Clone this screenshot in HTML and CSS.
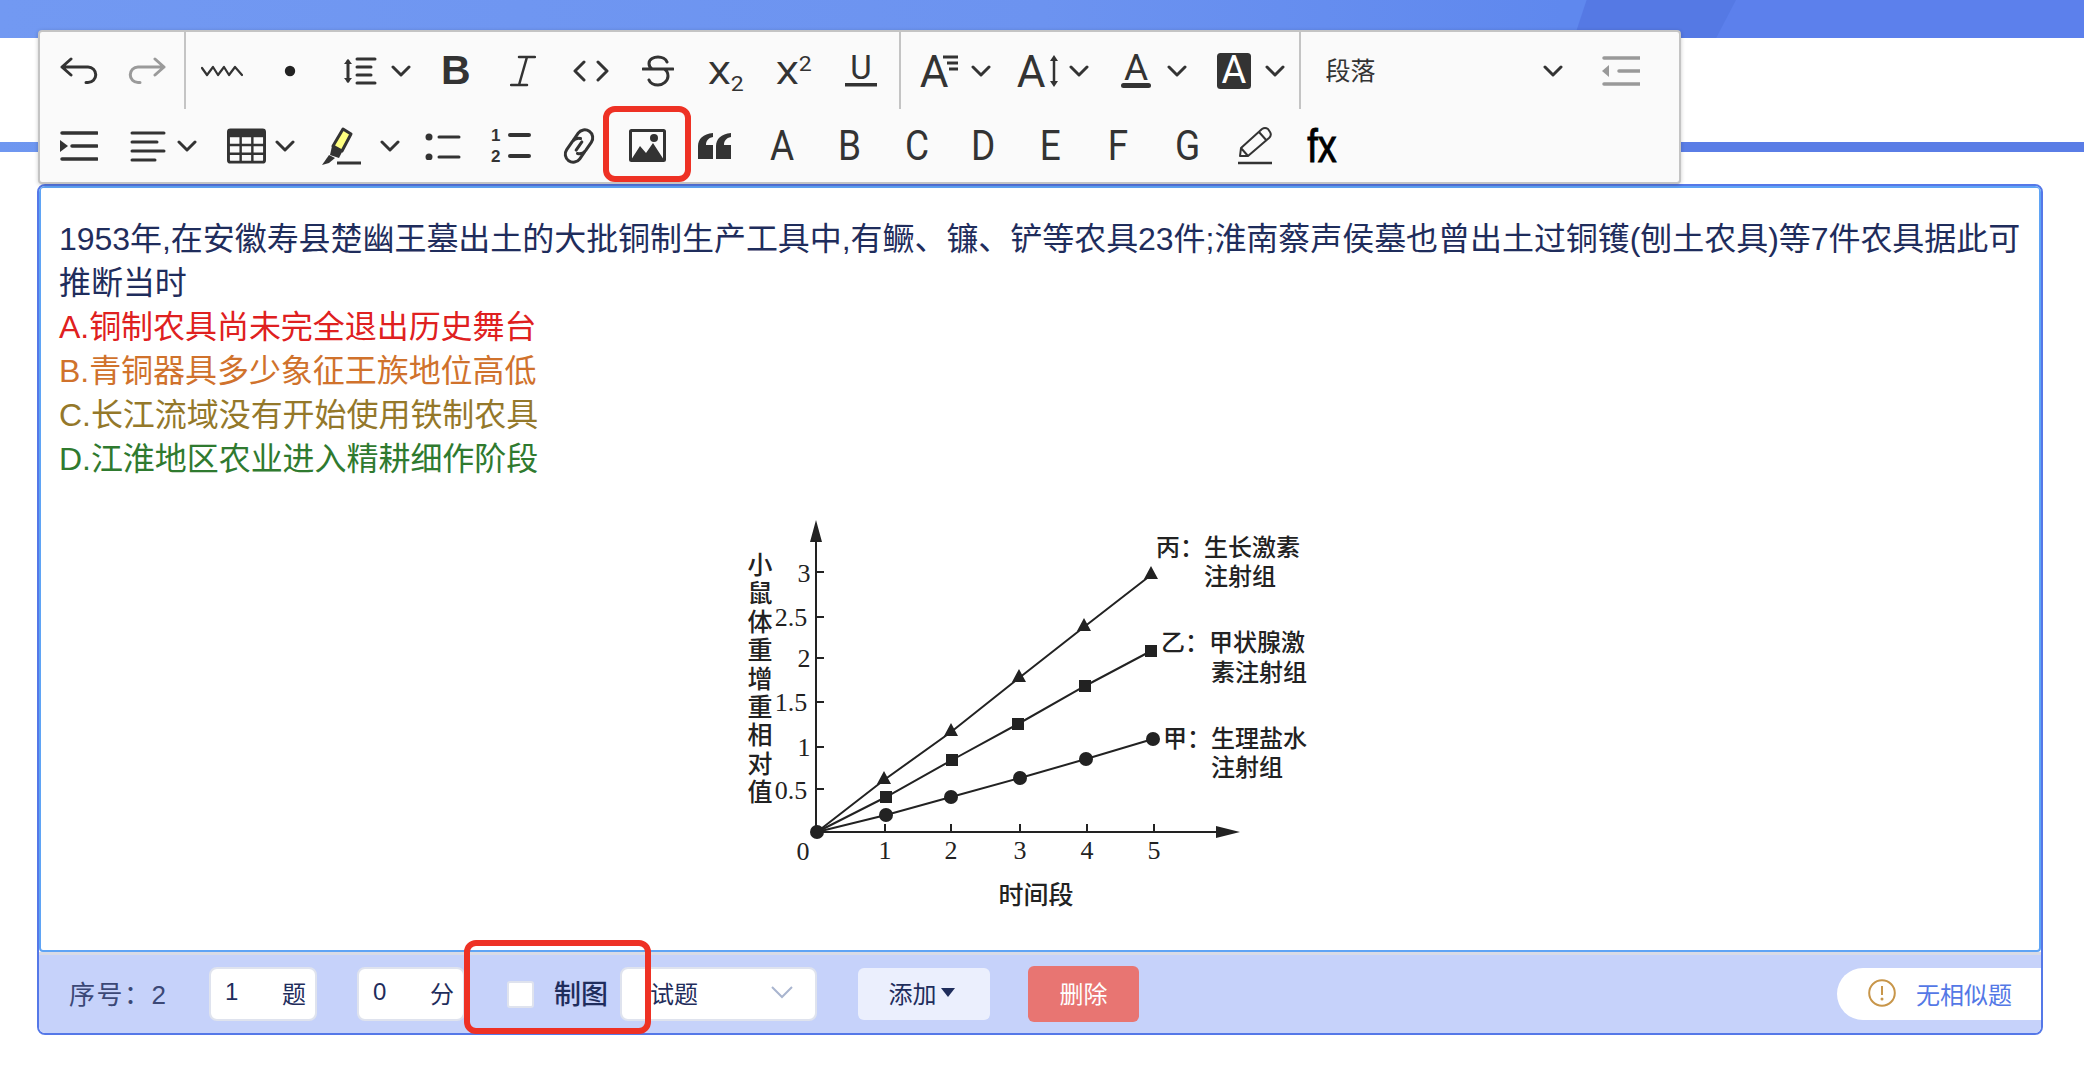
FILE: index.html
```html
<!DOCTYPE html>
<html lang="zh-CN">
  <head>
    <meta charset="UTF-8" />
    <title>试题编辑</title>
    <link rel="stylesheet" href="styles.css">
  </head>
  <body>
    <header class="page-head">
      <div class="band"></div>
      <div class="head-line"></div>
    </header>

    <div class="toolbar">
      <div class="tool-row">
        <span class="btn"><svg class="ico" width="38" height="28" viewBox="0 0 38 28"><path d="M11 2L2 10l9 8M2 10h26a7.5 7.5 0 0 1 0 15.5h-2"/></svg></span>
        <span class="btn"><svg class="ico ico-off" width="38" height="28" viewBox="0 0 38 28"><path d="M27 2l9 8-9 8M36 10H10a7.5 7.5 0 0 0 0 15.5h2"/></svg></span>
        <span class="sep"></span>
        <span class="btn"><svg class="ico ico-thin" width="42" height="12" viewBox="0 0 42 12"><path d="M1 3l5 7 6-8 5 8 6-8 5 8 6-8 7 8"/></svg></span>
        <span class="btn"><svg width="12" height="12" viewBox="0 0 12 12"><circle cx="6" cy="6" r="5.2" fill="#222"/></svg></span>
        <span class="drop">
          <span class="drop-icon"><svg class="ico" width="34" height="28" viewBox="0 0 34 28"><path d="M5 4v20M14 2h18M14 10h14M14 18h14M14 26h18"/><path class="solid" d="M1 7l4-5 4 5zM1 21l4 5 4-5z"/></svg></span>
          <svg class="chev" viewBox="0 0 20 12"><path d="M2 2l8 8 8-8"/></svg>
        </span>
        <span class="btn-n"><span class="glyph-b">B</span></span>
        <span class="btn-n"><svg class="ico ico-mid" width="26" height="32" viewBox="0 0 26 32"><path d="M9 2h16M1 30h16M17 2L9 30"/></svg></span>
        <span class="btn-n"><svg class="ico" width="36" height="22" viewBox="0 0 36 22"><path d="M11 2L2 11l9 9M25 2l9 9-9 9"/></svg></span>
        <span class="btn-n"><svg class="ico" width="32" height="32" viewBox="0 0 32 32"><path d="M1 14h30M25 7c-1-3-5-5-9-5s-9 2-9 6.500c0 2 1 4 3 5.500M22 14c3 1.500 4 4 4 7 0 5-5 9-10 9-4 0-8-2-9-5"/></svg></span>
        <span class="btn-n"><span class="glyph-x">X<sub>2</sub></span></span>
        <span class="btn-n"><span class="glyph-x">X<sup>2</sup></span></span>
        <span class="btn-n"><svg class="ico-box" width="34" height="34" viewBox="0 0 34 34"><text class="ico-text" x="17" y="25" text-anchor="middle" font-size="33">U</text><rect x="1" y="29" width="32" height="3.500" fill="#333"/></svg></span>
        <span class="sep sep-b"></span>
        <span class="drop">
          <span class="drop-icon"><svg class="ico-box" width="40" height="34" viewBox="0 0 40 34"><text class="ico-text" x="14" y="33" text-anchor="middle" font-size="44">A</text><path d="M23 3h15M27 9h11M29 15h9" stroke="#333" stroke-width="3"/></svg></span>
          <svg class="chev" viewBox="0 0 20 12"><path d="M2 2l8 8 8-8"/></svg>
        </span>
        <span class="drop">
          <span class="drop-icon"><svg class="ico-box" width="44" height="34" viewBox="0 0 44 34"><text class="ico-text" x="15" y="33" text-anchor="middle" font-size="44">A</text><path d="M38 4v26" stroke="#333" stroke-width="2.500"/><path d="M34 7l4-6 4 6zM34 27l4 6 4-6z" fill="#333"/></svg></span>
          <svg class="chev" viewBox="0 0 20 12"><path d="M2 2l8 8 8-8"/></svg>
        </span>
        <span class="drop">
          <span class="drop-icon"><svg class="ico-box" width="32" height="36" viewBox="0 0 32 36"><text class="ico-text" x="16" y="27" text-anchor="middle" font-size="37">A</text><rect x="1" y="30" width="30" height="5" rx="2.500" fill="#333"/></svg></span>
          <svg class="chev" viewBox="0 0 20 12"><path d="M2 2l8 8 8-8"/></svg>
        </span>
        <span class="drop">
          <span class="drop-icon"><svg class="ico-box" width="34" height="36" viewBox="0 0 34 36"><rect width="34" height="36" rx="3.500" fill="#333"/><text class="ico-text ico-text-w" x="17" y="30" text-anchor="middle" font-size="38">A</text></svg></span>
          <svg class="chev" viewBox="0 0 20 12"><path d="M2 2l8 8 8-8"/></svg>
        </span>
        <span class="sep sep-c"></span>
        <span class="para">
          <span class="para-text">段落</span>
          <svg class="chev" viewBox="0 0 20 12"><path d="M2 2l8 8 8-8"/></svg>
        </span>
        <span class="btn"><svg width="38" height="32" viewBox="0 0 38 32"><path d="M2 3h36M17 16h21M2 29h36" stroke="#999" stroke-width="3.500" stroke-linecap="round"/><path d="M0 16l7-6v12z" fill="#999"/></svg></span>
      </div>

      <div class="tool-row">
        <span class="btn"><svg width="38" height="32" viewBox="0 0 38 32"><path d="M2 3h35M12 16h25M2 29h35" stroke="#333" stroke-width="3.500" stroke-linecap="round"/><path d="M0 10l8 6-8 6z" fill="#333"/></svg></span>
        <span class="drop drop-tight">
          <span class="drop-icon"><svg class="ico" width="36" height="32" viewBox="0 0 36 32"><path d="M2 3h32M2 12h25M2 21h32M2 30h23"/></svg></span>
          <svg class="chev" viewBox="0 0 20 12"><path d="M2 2l8 8 8-8"/></svg>
        </span>
        <span class="drop drop-tight">
          <span class="drop-icon"><svg width="39" height="36" viewBox="0 0 40 36"><rect x="1.500" y="1.500" width="37" height="33" rx="2" fill="none" stroke="#333" stroke-width="3"/><rect x="1" y="1" width="38" height="8" fill="#333"/><path d="M14 8v26M26 8v26M2 17h36M2 26h36" stroke="#333" stroke-width="2.500"/></svg></span>
          <svg class="chev" viewBox="0 0 20 12"><path d="M2 2l8 8 8-8"/></svg>
        </span>
        <span class="drop drop-wide">
          <span class="drop-icon"><svg width="44" height="40" viewBox="0 0 44 40"><path d="M26 3l8 5-9 17-9-5z" fill="#ffff80" stroke="#333" stroke-width="3" stroke-linejoin="round"/><path d="M15 20l10 6-3 6-9-3z" fill="#333"/><path d="M12 29l6 3-6 5-7 2z" fill="#333"/><path d="M20 37h24" stroke="#333" stroke-width="3"/></svg></span>
          <svg class="chev" viewBox="0 0 20 12"><path d="M2 2l8 8 8-8"/></svg>
        </span>
        <span class="btn"><svg class="ico" width="36" height="28" viewBox="0 0 36 28"><circle class="solid" cx="4" cy="5" r="3.500"/><circle class="solid" cx="4" cy="25" r="3.500"/><path d="M14 5h20M14 25h20"/></svg></span>
        <span class="btn"><span class="glyph-ol"><span class="ol-item"><b>1</b><i></i></span><span class="ol-item"><b>2</b><i></i></span></span></span>
        <span class="btn"><svg class="ico ico-box" width="36" height="38" viewBox="0 0 36 38"><g transform="rotate(35 18 19)"><path d="M10 17V9a8 8 0 0 1 16 0v10a8 8 0 0 1-5 7"/><path d="M26 21v8a8 8 0 0 1-16 0V19a8 8 0 0 1 5-7"/><path d="M18 14v10"/></g></svg></span>
        <span class="btn"><svg width="37" height="33" viewBox="0 0 37 33"><rect x="1.500" y="1.500" width="34" height="30" rx="1" fill="none" stroke="#333" stroke-width="3"/><path d="M2 31l9-14 6 7 7-10 11 17z" fill="#333"/><circle cx="25" cy="9" r="4" fill="#333"/></svg></span>
        <span class="btn"><svg width="34" height="26" viewBox="0 0 34 26" fill="#333"><path d="M0 26V13C0 6 5 1 15 0v4C10 5 8 8 8 12h7v14z"/><path d="M18 26V13c0-7 5-12 15-13v4c-5 1-7 4-7 8h7v14z"/></svg></span>
        <span class="btn-l"><span class="glyph-l">A</span></span>
        <span class="btn-l"><span class="glyph-l">B</span></span>
        <span class="btn-l"><span class="glyph-l">C</span></span>
        <span class="btn-l"><span class="glyph-l">D</span></span>
        <span class="btn-l"><span class="glyph-l">E</span></span>
        <span class="btn-l"><span class="glyph-l">F</span></span>
        <span class="btn-l btn-g"><span class="glyph-l">G</span></span>
        <span class="btn-l"><svg width="36" height="40" viewBox="0 0 36 40"><path d="M3 30l1-8L25 3q3-2 6 0l2 3q2 3-1 6L11 30zM22 6l8 9M4 22l7 8" fill="none" stroke="#333" stroke-width="2" stroke-linejoin="round"/><path d="M1 37h34" stroke="#333" stroke-width="2.500"/></svg></span>
        <span class="btn-l"><span class="glyph-fx">fx</span></span>
      </div>
    </div>

    <main class="editor">
      <section class="content">
        <p class="q">1953年,在安徽寿县楚幽王墓出土的大批铜制生产工具中,有鳜、镰、铲等农具23件;淮南蔡声侯墓也曾出土过铜镬(刨土农具)等7件农具据此可推断当时</p>
        <p class="opt-a">A.铜制农具尚未完全退出历史舞台</p>
        <p class="opt-b">B.青铜器具多少象征王族地位高低</p>
        <p class="opt-c">C.长江流域没有开始使用铁制农具</p>
        <p class="opt-d">D.江淮地区农业进入精耕细作阶段</p>

        <svg class="chart" width="620" height="420" viewBox="730 510 620 420">
          <path class="axis" d="M816 528V834M815 832H1225"/>
          <path class="solid-ink" d="M816 520l-6 22h12zM1240 832l-24-6v12z"/>
          <path class="axis" d="M816 572h8M816 617h8M816 658h8M816 702h8M816 747h8M816 789h8M885 832v-8M951 832v-8M1020 832v-8M1087 832v-8M1154 832v-8"/>

          <polyline class="line" points="817,832 884,780 951,732 1019,678 1084,627 1151,575"/>
          <polyline class="line" points="817,832 886,797 952,760 1018,724 1085,686 1151,651"/>
          <polyline class="line" points="817,832 886,815 951,797 1020,778 1086,759 1153,739"/>

          <path class="solid-ink" d="M884 771l7 13h-14zM951 723l7 13h-14zM1019 669l7 13h-14zM1084 618l7 13h-14zM1151 566l7 13h-14z"/>
          <path class="solid-ink" d="M880 791h12v12h-12zM946 754h12v12h-12zM1012 718h12v12h-12zM1079 680h12v12h-12zM1145 645h12v12h-12z"/>
          <g class="solid-ink">
            <circle cx="817" cy="832" r="7"/>
            <circle cx="886" cy="815" r="7"/>
            <circle cx="951" cy="797" r="7"/>
            <circle cx="1020" cy="778" r="7"/>
            <circle cx="1086" cy="759" r="7"/>
            <circle cx="1153" cy="739" r="7"/>
          </g>

          <g class="num">
            <text x="804" y="573">3</text>
            <text x="791" y="617">2.5</text>
            <text x="804" y="658">2</text>
            <text x="791" y="702">1.5</text>
            <text x="804" y="747">1</text>
            <text x="791" y="790">0.5</text>
            <text x="803" y="851">0</text>
            <text x="885" y="850">1</text>
            <text x="951" y="850">2</text>
            <text x="1020" y="850">3</text>
            <text x="1087" y="850">4</text>
            <text x="1154" y="850">5</text>
          </g>
          <g class="cn">
            <text class="y-title" x="760" y="552">小鼠体重增重相对值</text>
            <text x="1036" y="893">时间段</text>
          </g>
          <g class="cn cn-left">
            <text x="1156" y="545">丙：生长激素</text>
            <text x="1204" y="574">注射组</text>
            <text x="1161" y="640">乙：甲状腺激</text>
            <text x="1211" y="670">素注射组</text>
            <text x="1163" y="736">甲：生理盐水</text>
            <text x="1211" y="765">注射组</text>
          </g>
        </svg>
      </section>

      <footer class="foot">
        <span class="seq">序号：2</span>
        <span class="field"><span>1</span><span>题</span></span>
        <span class="field field-score"><span>0</span><span>分</span></span>
        <span class="check"></span>
        <span class="check-label">制图</span>
        <span class="type-select">
          <span>试题</span>
          <svg width="24" height="14" viewBox="0 0 24 14"><path d="M2 2l10 10L22 2" fill="none" stroke="#a9b5cf" stroke-width="2"/></svg>
        </span>
        <span class="add-btn">添加<i class="caret"></i></span>
        <span class="del-btn">删除</span>
        <span class="similar">
          <svg width="28" height="28" viewBox="0 0 28 28"><circle cx="14" cy="14" r="12.800" fill="none" stroke="#c8964a" stroke-width="2"/><path d="M14 7v9" stroke="#c8964a" stroke-width="2"/><circle cx="14" cy="20" r="1.500" fill="#c8964a"/></svg>
          <span>无相似题</span>
        </span>
      </footer>
    </main>

    <div class="mark mark-image"></div>
    <div class="mark mark-check"></div>
  </body>
</html>
```

FILE: styles.css
```css
* {
  box-sizing: border-box;
}
html,
body {
  height: 100%;
}
body {
  position: relative;
  margin: 0;
  background-color: #fff;
  font-family: "Liberation Sans", "Noto Sans CJK SC", sans-serif;
  color: #1f2d5c;
  overflow: hidden;
}
p {
  margin: 0;
}

/* top of the page, mostly hidden behind the toolbar */
.page-head {
  height: 152px;
  display: flex;
  flex-direction: column;
  justify-content: space-between;
}
.band {
  position: relative;
  height: 38px;
  background: linear-gradient(90deg, #7299f2, #6c93f0 50%, #5f88ee 75%);
  overflow: hidden;
}
.band::after {
  content: "";
  position: absolute;
  top: 0;
  bottom: 0;
  left: 1556px;
  width: 180px;
  background-color: #5579e4;
  clip-path: polygon(10% 100%, 17% 0, 100% 0, 89% 100%);
}
.band::before {
  content: "";
  position: absolute;
  top: 0;
  bottom: 0;
  right: 0;
  left: 1710px;
  background-color: #5c80ec;
}
.head-line {
  height: 10px;
  background: linear-gradient(90deg, #6f97f0, #5a7de6 60%);
}

/* toolbar */
.toolbar {
  position: absolute;
  top: 30px;
  left: 38px;
  width: 1643px;
  height: 154px;
  padding-left: 5px;
  display: flex;
  flex-direction: column;
  background-color: #fafafa;
  border: 2px solid #c4c4c4;
  border-radius: 4px;
  box-shadow: 0 1px 4px rgba(0, 0, 0, 0.2);
  z-index: 2;
}
.tool-row {
  display: flex;
  align-items: center;
}
.tool-row:first-child {
  height: 77px;
}
.tool-row:last-child {
  height: 73px;
}
.btn,
.btn-n,
.btn-l {
  flex: none;
  display: flex;
  align-items: center;
  justify-content: center;
  height: 100%;
  width: 68px;
}
.btn-n {
  width: 67.5px;
}
.btn-l {
  width: 67px;
}
.btn-g {
  margin-left: 3px;
}
.sep {
  flex: none;
  width: 7px;
  height: 100%;
  display: flex;
  justify-content: center;
}
.sep::before {
  content: "";
  width: 2px;
  background-color: #c4c4c4;
}
.sep-b {
  margin-left: 2px;
}
.sep-c {
  margin-left: 1px;
}
.drop {
  flex: none;
  display: flex;
  align-items: center;
  width: 98px;
  height: 100%;
  padding-left: 20px;
}
.drop-icon {
  flex: none;
  display: flex;
  justify-content: center;
  width: 32px;
}
.drop-icon svg {
  flex: none;
}
.chev {
  flex: none;
  width: 20px;
  height: 12px;
  margin-left: 15px;
  fill: none;
  stroke: #333;
  stroke-width: 3;
  stroke-linecap: round;
  stroke-linejoin: round;
}
.drop-tight {
  padding-left: 19px;
}
.drop-tight .chev {
  margin-left: 13px;
}
.drop-wide {
  width: 100px;
  padding-left: 14px;
}
.drop-wide .chev {
  margin-left: 25px;
}
.para {
  flex: none;
  display: flex;
  align-items: center;
  justify-content: space-between;
  width: 283px;
  padding: 0 24px 0 22px;
  font-size: 25px;
  color: #333;
}
.para-text {
  padding-bottom: 4px;
}
.para .chev {
  margin-left: 0;
}
.ico {
  fill: none;
  stroke: #333;
  stroke-width: 3;
  stroke-linecap: round;
  stroke-linejoin: round;
}
.ico-off {
  stroke: #9a9a9a;
}
.ico-thin {
  stroke-width: 2.2;
}
.ico-mid {
  stroke-width: 2.5;
}
.ico .solid {
  fill: #333;
  stroke: none;
}
.ico-box {
  overflow: visible;
}
.ico-text {
  font-family: Roboto, sans-serif;
  font-weight: 400;
  fill: #333;
}
.ico-text-w {
  fill: #fff;
}
.glyph-b {
  font-size: 41px;
  font-weight: 700;
  line-height: 1;
  color: #333;
}
.glyph-x {
  display: block;
  margin-top: 5px;
  font-family: Roboto, sans-serif;
  font-size: 32px;
  line-height: 1;
  color: #333;
  transform: scaleX(1.15);
}
.glyph-x sub,
.glyph-x sup {
  font-size: 20px;
  line-height: 0;
}
.glyph-x sub {
  vertical-align: -7px;
}
.glyph-x sup {
  vertical-align: 13px;
}
.glyph-l {
  display: block;
  font-family: Roboto, sans-serif;
  font-size: 43px;
  line-height: 1;
  color: #333;
  transform: scaleX(0.86);
}
.glyph-fx {
  display: block;
  font-size: 46px;
  line-height: 1;
  color: #000;
  transform: scaleX(0.82);
  -webkit-text-stroke: 1px #000;
}
.glyph-ol {
  display: flex;
  flex-direction: column;
  gap: 4px;
}
.ol-item {
  display: flex;
  align-items: center;
  gap: 7px;
  height: 17px;
}
.ol-item b {
  width: 10px;
  font-size: 17px;
  line-height: 1;
  color: #333;
}
.ol-item i {
  width: 23px;
  height: 3.5px;
  border-radius: 2px;
  background-color: #333;
}

/* editor */
.editor {
  display: flex;
  flex-direction: column;
  width: 2006px;
  height: 851px;
  margin: 32px 0 0 37px;
  border: 2px solid #5578e8;
  border-radius: 8px;
  overflow: hidden;
}
.content {
  flex: 1;
  display: flex;
  flex-direction: column;
  padding: 29px 8px 0 18px;
  border: 2px solid #5fa4f5;
  border-radius: 4px;
  background-color: #fff;
  font-size: 32px;
  line-height: 44px;
  letter-spacing: -0.05px;
}
.opt-a {
  color: #df2020;
}
.opt-b {
  color: #d0722c;
}
.opt-c {
  color: #94782a;
}
.opt-d {
  color: #2f7a2f;
}

/* chart in the question */
.chart {
  flex: none;
  align-self: center;
  margin: 29px 10px 0 0;
}
.axis,
.line {
  fill: none;
  stroke: #222;
  stroke-width: 2;
}
.solid-ink {
  fill: #222;
}
.chart text {
  fill: #222;
  text-anchor: middle;
  dominant-baseline: central;
  letter-spacing: 0;
}
.num text {
  font-family: "Liberation Serif", serif;
  font-size: 26px;
}
.cn text {
  font-family: "Noto Sans CJK SC", sans-serif;
  font-size: 25px;
  font-weight: 500;
}
.cn-left text {
  font-size: 24px;
  text-anchor: start;
}
.chart .y-title {
  writing-mode: vertical-rl;
  text-anchor: start;
  letter-spacing: 3.4px;
}

/* bottom bar */
.foot {
  flex: none;
  display: flex;
  align-items: center;
  height: 81px;
  padding-left: 30px;
  background-color: #c6d2fa;
  border-top: 3px solid #d9dbe6;
  font-size: 24px;
}
.seq {
  flex: none;
  width: 140px;
  padding-bottom: 4px;
  font-size: 26px;
  letter-spacing: 1.5px;
  color: #3b4876;
}
.field {
  flex: none;
  display: flex;
  align-items: center;
  justify-content: space-between;
  width: 108px;
  height: 54px;
  padding: 0 9px 4px 14px;
  background-color: #fff;
  border: 2px solid #dfe3ee;
  border-radius: 8px;
}
.field-score {
  margin-left: 40px;
}
.check {
  flex: none;
  width: 27px;
  height: 27px;
  margin-left: 42px;
  background-color: #fff;
  border: 2px solid #dfe3ee;
  border-radius: 3px;
}
.check-label {
  flex: none;
  width: 55px;
  margin-left: 20px;
  padding-bottom: 3px;
  font-size: 27px;
  font-weight: 500;
  white-space: nowrap;
}
.type-select {
  flex: none;
  display: flex;
  align-items: center;
  justify-content: space-between;
  width: 197px;
  height: 54px;
  margin-left: 11px;
  padding: 0 21px 4px 28px;
  background-color: #fff;
  border: 2px solid #dfe3ee;
  border-radius: 8px;
}
.add-btn {
  flex: none;
  display: flex;
  align-items: center;
  justify-content: center;
  gap: 4px;
  width: 132px;
  height: 52px;
  margin-left: 41px;
  padding: 0 5px 3px 0;
  background-color: #ebeffd;
  border-radius: 6px;
}
.caret {
  width: 0;
  height: 0;
  border-style: solid;
  border-width: 9px 7px 0;
  border-color: #1f2d5c transparent transparent;
}
.del-btn {
  flex: none;
  display: flex;
  align-items: center;
  justify-content: center;
  width: 111px;
  height: 56px;
  margin-left: 38px;
  padding-bottom: 3px;
  background-color: #e87572;
  border-radius: 6px;
  color: #fff;
}
.similar {
  flex: none;
  display: flex;
  align-items: center;
  gap: 20px;
  width: 204px;
  height: 52px;
  margin-left: auto;
  padding: 0 0 2px 31px;
  background-color: #fff;
  border-radius: 26px 0 0 26px;
  color: #5478e6;
  white-space: nowrap;
}

/* red annotation boxes drawn over the screenshot */
.mark {
  position: absolute;
  border: 6px solid #ee3124;
  border-radius: 12px;
  z-index: 3;
}
.mark-image {
  top: 106px;
  left: 603px;
  width: 88px;
  height: 76px;
}
.mark-check {
  top: 940px;
  left: 464px;
  width: 187px;
  height: 94px;
}
```
